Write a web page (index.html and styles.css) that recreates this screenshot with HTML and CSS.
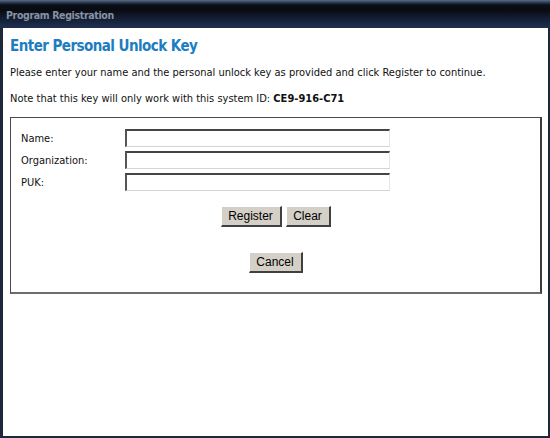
FILE: index.html
```html
<!DOCTYPE html>
<html>
<head>
<meta charset="utf-8">
<title>Program Registration</title>
<link rel="stylesheet" href="styles.css">
</head>
<body>
<div class="window">
  <div class="titlebar"><span class="title">Program Registration</span></div>
  <div class="client">
    <h1 class="heading">Enter Personal Unlock Key</h1>
    <p class="text p1">Please enter your name and the personal unlock key as provided and click Register to continue.</p>
    <p class="text p2">Note that this key will only work with this system ID: <b>CE9-916-C71</b></p>
    <div class="box">
      <div class="fields">
        <label class="label">Name:</label><input class="field" type="text">
        <label class="label">Organization:</label><input class="field" type="text">
        <label class="label">PUK:</label><input class="field" type="text">
      </div>
      <div class="actions">
        <button class="btn btn-register">Register</button>
        <button class="btn btn-clear">Clear</button>
      </div>
      <div class="actions cancel-row">
        <button class="btn btn-cancel">Cancel</button>
      </div>
    </div>
  </div>
</div>
</body>
</html>
```
FILE: styles.css
```css
html, body {
  margin: 0;
  padding: 0;
  background: #1b2638;
}
.window {
  width: 550px;
  height: 438px;
  box-sizing: border-box;
  display: flex;
  flex-direction: column;
  background: #1d293b;
  padding: 0 2px 2px 3px;
}
.titlebar {
  height: 28px;
  flex: none;
  margin: 0 -2px 0 -3px;
  padding-left: 6px;
  display: flex;
  align-items: center;
  background: linear-gradient(to bottom, #5a6d88 0px, #34445c 2px, #0a0e16 5px, #080b12 10px, #15213a 20px, #1f3050 28px);
}
.title {
  font-family: "DejaVu Sans Condensed", "DejaVu Sans", sans-serif;
  font-weight: bold;
  font-size: 10.5px;
  color: #8893a0;
  letter-spacing: -0.35px;
  padding-top: 1px;
}
.client {
  flex: 1;
  background: #ffffff;
  padding: 0 6px 0 7px;
  font-family: "DejaVu Sans Condensed", "DejaVu Sans", sans-serif;
  color: #111;
}
.heading {
  margin: 9px 0 0;
  font-size: 15px;
  line-height: 18px;
  font-weight: bold;
  color: #1d7dc0;
  letter-spacing: -0.55px;
}
.text {
  font-size: 11px;
  line-height: 14px;
  margin: 0;
}
.p1 { margin-top: 11px; }
.p2 { margin-top: 12px; }
.p2 b { font-weight: bold; }
.box {
  margin-top: 11px;
  height: 177px;
  box-sizing: border-box;
  border: 1px solid #4a4a4a;
  border-right: 2px solid #3c3c3c;
  border-bottom: 2px solid #6c6c6c;
  padding: 11px 0 0 10px;
}
.fields {
  display: grid;
  grid-template-columns: 104px 265px;
  row-gap: 4px;
  align-items: center;
}
.label {
  font-size: 11px;
  color: #111;
}
.field {
  width: 265px;
  height: 18px;
  box-sizing: border-box;
  margin: 0;
  padding: 0;
  background: #fff;
  border-style: solid;
  border-width: 2px 1px 1px 2px;
  border-color: #444 #e8e6e2 #d8d4cc #555;
  outline: none;
}
.actions {
  display: flex;
  justify-content: center;
  gap: 4px;
  margin-top: 15px;
  margin-left: -10px;
}
.cancel-row { margin-top: 25px; }
.btn {
  height: 21px;
  box-sizing: border-box;
  margin: 0;
  padding: 0 6px;
  font-family: "Liberation Sans", Arial, sans-serif;
  font-size: 12px;
  color: #000;
  background: #d4d0c8;
  border-style: solid;
  border-width: 1px 2px 2px 1px;
  border-color: #ffffff #404040 #404040 #ffffff;
}
.btn-register { width: 61px; }
.btn-clear { width: 45px; }
.btn-cancel { width: 54px; }
```
